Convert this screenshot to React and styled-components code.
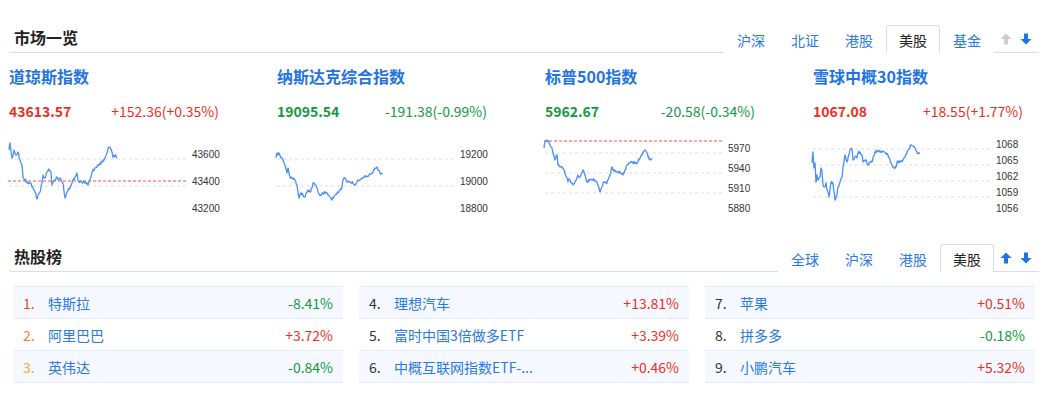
import React from "react";
import styled, { createGlobalStyle } from "styled-components";

const GlobalStyle = createGlobalStyle`
  html, body {
    margin: 0;
    padding: 0;
    background: #fff;
  }
  body {
    font-family: "Noto Sans CJK SC", "Liberation Sans", sans-serif;
    color: #333;
  }
`;

const Page = styled.div`
  width: 1030px;
  margin-left: 9px;
  padding-top: 20px;
`;

const SectionHead = styled.div`
  display: flex;
  align-items: flex-end;
  height: 32px;
  border-bottom: 1px solid #ddd;
  margin-top: ${({ top }) => top || 0}px;
`;

const Title = styled.h2`
  margin: 0 auto 0 5px;
  align-self: center;
  font-size: 16px;
  font-weight: 700;
  color: #222;
  line-height: 32px;
  padding-top: 1px;
`;

const Tab = styled.div`
  width: 54px;
  height: 28px;
  box-sizing: border-box;
  display: flex;
  align-items: center;
  justify-content: center;
  font-size: 14px;
  color: ${({ active }) => (active ? "#222" : "#2b79e3")};
  border: 1px solid ${({ active }) => (active ? "#ddd" : "transparent")};
  border-bottom: none;
  border-radius: 3px 3px 0 0;
  background: #fff;
  margin-bottom: -1px;
  cursor: pointer;
`;

const Arrows = styled.div`
  display: flex;
  gap: 8px;
  align-items: center;
  height: 27px;
  margin-left: 6px;
  padding-right: 7px;
`;

const IndexRow = styled.div`
  display: flex;
  margin-top: 11px;
`;

const IndexCard = styled.div`
  flex: none;
  width: 268px;
  display: flex;
  flex-direction: column;
`;

const IndexName = styled.div`
  font-size: 16px;
  font-weight: 700;
  line-height: 24px;
  color: #1f74e0;
`;

const Values = styled.div`
  width: 210px;
  margin-top: 13px;
  display: flex;
  justify-content: space-between;
  line-height: 20px;
  font-size: 14px;
  color: ${({ up }) => (up ? "#ee2f1e" : "#129a3e")};
`;

const Price = styled.span`
  font-weight: 700;
`;

const Chart = styled.svg`
  display: block;
  margin-top: 4px;
  overflow: visible;
`;

const List = styled.div`
  display: grid;
  grid-template-columns: repeat(3, 330px);
  column-gap: 16px;
  padding: 0 4px;
  margin-top: 14px;
`;

const Column = styled.div`
  border-top: 1px solid #e3edfb;
`;

const Row = styled.div`
  display: flex;
  align-items: center;
  height: 31px;
  border-bottom: 1px solid #e3edfb;
  background: ${({ shade }) => (shade ? "#f5f9ff" : "#fff")};
  padding: 0 10px;
  font-size: 14px;
`;

const Rank = styled.span`
  width: 25px;
  color: ${({ color }) => color};
`;

const StockName = styled.span`
  flex: 1;
  color: #2b79e3;
  white-space: nowrap;
  overflow: hidden;
`;

const Pct = styled.span`
  color: ${({ up }) => (up ? "#ee2f1e" : "#129a3e")};
`;

function Arrow({ down, color }) {
  return (
    <svg width="12" height="12" viewBox="0 0 12 12">
      <path
        d="M6 0.5 L11.5 6 H8 V11.5 H4 V6 H0.5 Z"
        fill={color}
        transform={down ? "rotate(180 6 6)" : undefined}
      />
    </svg>
  );
}

function seeded(seed) {
  let s = seed;
  return () => {
    s = (s * 16807) % 2147483647;
    return s / 2147483647;
  };
}

function buildPath(points, left, seed) {
  const rnd = seeded(seed);
  const out = [];
  for (let i = 0; i < points.length - 1; i += 1) {
    const [x0, y0] = points[i];
    const [x1, y1] = points[i + 1];
    const steps = Math.max(1, Math.round((x1 - x0) * 1.5));
    for (let k = 0; k < steps; k += 1) {
      const t = k / steps;
      const jitter = k === 0 ? 0 : (rnd() - 0.5) * 2.6;
      out.push([x0 + (x1 - x0) * t - left, y0 + (y1 - y0) * t + jitter - 125]);
    }
  }
  const last = points[points.length - 1];
  out.push([last[0] - left, last[1] - 125]);
  return out.map(([x, y], i) => `${i ? "L" : "M"}${x.toFixed(1)} ${y.toFixed(1)}`).join(" ");
}

const indices = [
  {
    name: "道琼斯指数",
    value: "43613.57",
    change: "+152.36(+0.35%)",
    up: true,
    left: 9,
    labels: [["43600", 159], ["43400", 186], ["43200", 213]],
    grid: [159, 186],
    prev: 181,
    points: [[9,150],[10,143],[12,158],[14,150],[16,155],[18,152],[20,160],[22,165],[23,177],[27,182],[30,183],[33,188],[35,192],[37,199],[38,195],[40,192],[42,183],[43,175],[45,178],[47,172],[49,169],[51,172],[52,185],[53,182],[57,177],[58,180],[60,178],[62,182],[63,183],[65,198],[67,192],[68,190],[70,188],[72,183],[73,180],[75,177],[77,173],[78,180],[80,182],[83,182],[87,183],[88,185],[90,180],[92,172],[95,168],[98,165],[102,162],[105,158],[107,153],[108,148],[110,147],[112,152],[113,157],[115,155],[117,158]],
  },
  {
    name: "纳斯达克综合指数",
    value: "19095.54",
    change: "-191.38(-0.99%)",
    up: false,
    left: 277,
    labels: [["19200", 159], ["19000", 186], ["18800", 213]],
    grid: [159, 186],
    points: [[276,158],[277,153],[278,155],[279,153],[281,158],[283,160],[285,165],[287,173],[288,168],[290,177],[292,178],[293,178],[295,180],[297,185],[298,192],[299,198],[301,193],[303,195],[305,197],[307,192],[308,190],[310,192],[312,188],[313,183],[315,185],[317,188],[318,192],[320,195],[323,193],[327,193],[328,195],[330,197],[332,200],[333,198],[335,195],[337,193],[338,193],[340,190],[342,187],[343,180],[345,178],[347,182],[350,182],[353,183],[355,185],[357,182],[358,180],[362,178],[365,177],[368,176],[372,173],[375,168],[377,167],[378,170],[380,173],[383,173]],
  },
  {
    name: "标普500指数",
    value: "5962.67",
    change: "-20.58(-0.34%)",
    up: false,
    left: 545,
    labels: [["5970", 153], ["5940", 173], ["5910", 193], ["5880", 213]],
    grid: [153, 173, 193],
    prev: 141,
    points: [[544,148],[545,142],[547,140],[548,141],[550,145],[552,148],[553,153],[555,160],[557,155],[558,165],[562,167],[563,168],[565,173],[567,178],[568,182],[569,179],[571,183],[573,185],[575,182],[577,178],[578,175],[580,177],[582,173],[583,170],[585,175],[587,182],[590,180],[593,179],[597,182],[598,185],[600,192],[602,187],[603,183],[607,183],[608,180],[610,175],[612,167],[613,170],[617,172],[620,172],[623,175],[625,170],[627,165],[630,163],[633,162],[637,163],[640,158],[643,152],[645,150],[647,153],[648,157],[650,159],[652,158]],
  },
  {
    name: "雪球中概30指数",
    value: "1067.08",
    change: "+18.55(+1.77%)",
    up: true,
    left: 813,
    labels: [["1068", 149], ["1065", 165], ["1062", 181], ["1059", 197], ["1056", 213]],
    grid: [149, 165, 181, 197],
    points: [[812,163],[813,152],[814,168],[815,163],[816,182],[817,175],[818,180],[820,177],[821,168],[822,172],[823,185],[825,187],[826,183],[827,190],[829,197],[831,182],[833,183],[834,192],[835,200],[837,195],[838,187],[840,182],[842,177],[843,167],[845,155],[847,162],[848,158],[850,150],[852,149],[853,160],[855,157],[857,158],[858,153],[860,152],[862,155],[863,162],[866,160],[868,165],[869,163],[872,162],[873,157],[875,152],[878,151],[882,152],[885,153],[888,155],[890,160],[892,165],[894,168],[896,167],[897,162],[900,162],[903,160],[905,157],[907,153],[908,150],[911,145],[913,146],[915,148],[917,152],[920,153]],
  },
];

const stocks = [
  [
    { n: "特斯拉", p: "-8.41%", up: false },
    { n: "阿里巴巴", p: "+3.72%", up: true },
    { n: "英伟达", p: "-0.84%", up: false },
  ],
  [
    { n: "理想汽车", p: "+13.81%", up: true },
    { n: "富时中国3倍做多ETF", p: "+3.39%", up: true },
    { n: "中概互联网指数ETF-...", p: "+0.46%", up: true },
  ],
  [
    { n: "苹果", p: "+0.51%", up: true },
    { n: "拼多多", p: "-0.18%", up: false },
    { n: "小鹏汽车", p: "+5.32%", up: true },
  ],
];

const rankColors = ["#f5431c", "#ff7a2b", "#ffa424"];

function IndexChart({ item, seed }) {
  return (
    <Chart width="230" height="92" viewBox="0 0 230 92">
      {item.grid.map((g) => (
        <line key={g} x1="0" x2="178" y1={g - 125} y2={g - 125} stroke="#ddd" strokeWidth="1" strokeDasharray="3 3" />
      ))}
      {item.prev && (
        <line x1="-1" x2="178" y1={item.prev - 125} y2={item.prev - 125} stroke="#e8564a" strokeWidth="1" strokeDasharray="3 2" />
      )}
      <path d={buildPath(item.points, item.left, seed)} fill="none" stroke="#4a8ff6" strokeWidth="1.3" strokeLinejoin="round" />
      {item.labels.map(([t, y]) => (
        <text key={t} x="183" y={y - 125 - 1} fontSize="10" fill="#333" fontFamily="Liberation Sans, sans-serif">
          {t}
        </text>
      ))}
    </Chart>
  );
}

function SectionTabs({ tabs, active, upDisabled }) {
  return (
    <>
      {tabs.map((t) => (
        <Tab key={t} active={t === active}>
          {t}
        </Tab>
      ))}
      <Arrows>
        <Arrow color={upDisabled ? "#c9ced4" : "#1f74e0"} />
        <Arrow down color="#1f74e0" />
      </Arrows>
    </>
  );
}

export default function App() {
  return (
    <Page>
      <GlobalStyle />
      <SectionHead>
        <Title>市场一览</Title>
        <SectionTabs tabs={["沪深", "北证", "港股", "美股", "基金"]} active="美股" upDisabled />
      </SectionHead>
      <IndexRow>
        {indices.map((item, i) => (
          <IndexCard key={item.name}>
            <IndexName>{item.name}</IndexName>
            <Values up={item.up}>
              <Price>{item.value}</Price>
              <span>{item.change}</span>
            </Values>
            <IndexChart item={item} seed={i * 97 + 13} />
          </IndexCard>
        ))}
      </IndexRow>
      <SectionHead top={22}>
        <Title>热股榜</Title>
        <SectionTabs tabs={["全球", "沪深", "港股", "美股"]} active="美股" />
      </SectionHead>
      <List>
        {stocks.map((col, ci) => (
          <Column key={ci}>
            {col.map((s, ri) => {
              const rank = ci * 3 + ri + 1;
              return (
                <Row key={s.n} shade={ri !== 1}>
                  <Rank color={rank <= 3 ? rankColors[rank - 1] : "#333"}>{rank}.</Rank>
                  <StockName>{s.n}</StockName>
                  <Pct up={s.up}>{s.p}</Pct>
                </Row>
              );
            })}
          </Column>
        ))}
      </List>
    </Page>
  );
}
